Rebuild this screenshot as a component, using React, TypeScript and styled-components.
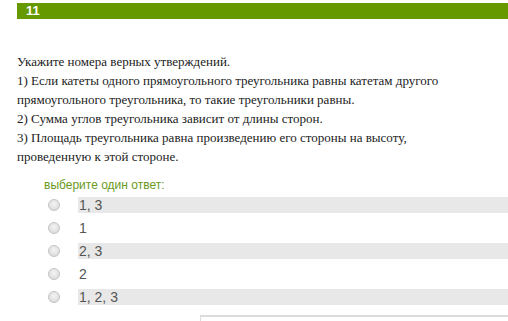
import React from 'react'
import styled, { createGlobalStyle } from 'styled-components'

const GlobalStyle = createGlobalStyle`
  html, body {
    margin: 0;
    padding: 0;
    background: #fff;
  }
`

const options = ['1, 3', '1', '2, 3', '2', '1, 2, 3']

const statements = [
  'Укажите номера верных утверждений.',
  '1) Если катеты одного прямоугольного треугольника равны катетам другого',
  'прямоугольного треугольника, то такие треугольники равны.',
  '2) Сумма углов треугольника зависит от длины сторон.',
  '3) Площадь треугольника равна произведению его стороны на высоту,',
  'проведенную к этой стороне.',
]

export default function App() {
  return (
    <Page>
      <GlobalStyle />
      <Header>11</Header>
      <Question>
        {statements.map((s) => (
          <Line key={s}>{s}</Line>
        ))}
      </Question>
      <Prompt>выберите один ответ:</Prompt>
      <Options>
        {options.map((o, i) => (
          <Option key={o}>
            <RadioCell>
              <Radio />
            </RadioCell>
            <Label shaded={i % 2 === 0}>{o}</Label>
          </Option>
        ))}
      </Options>
      <Footer />
    </Page>
  )
}

const Page = styled.div`
  width: 508px;
  height: 321px;
  overflow: hidden;
  padding-top: 3px;
  box-sizing: border-box;
`

const Header = styled.div`
  margin-left: 17px;
  height: 16px;
  background: #669900;
  color: #fff;
  font-family: 'Liberation Sans', Arial, sans-serif;
  font-weight: bold;
  font-size: 13px;
  line-height: 16px;
  padding-left: 9px;
`

const Question = styled.div`
  margin-top: 33px;
  padding-left: 17px;
  font-family: 'Liberation Serif', 'Times New Roman', serif;
  font-size: 13px;
  line-height: 19px;
  color: #222;
`

const Line = styled.div``

const Prompt = styled.div`
  margin-top: 11px;
  padding-left: 44px;
  height: 16px;
  font-family: 'Liberation Sans', Arial, sans-serif;
  font-size: 12px;
  line-height: 16px;
  color: #6a9a1c;
`

const Options = styled.div`
  margin-top: 4px;
  display: flex;
  flex-direction: column;
  gap: 7px;
`

const Option = styled.div`
  display: flex;
  align-items: center;
  height: 16px;
`

const RadioCell = styled.div`
  width: 78px;
  display: flex;
  justify-content: flex-end;
  padding-right: 18px;
  box-sizing: border-box;
`

const Radio = styled.span`
  display: block;
  width: 12px;
  height: 12px;
  border-radius: 50%;
  border: 1px solid #c4c4c4;
  box-sizing: border-box;
  background: radial-gradient(circle at 50% 40%, #f4f4f4 0%, #dedede 70%, #cfcfcf 100%);
`

const Label = styled.div<{ shaded: boolean }>`
  flex: 1;
  height: 16px;
  padding-left: 1px;
  background: ${(p) => (p.shaded ? '#e8e8e8' : 'transparent')};
  font-family: 'Liberation Sans', Arial, sans-serif;
  font-size: 14px;
  line-height: 16px;
  color: #555;
`

const Footer = styled.div`
  margin-top: 10px;
  margin-left: 200px;
  height: 10px;
  border-top: 2px solid #dcdcdc;
  border-left: 1px solid #dcdcdc;
`
